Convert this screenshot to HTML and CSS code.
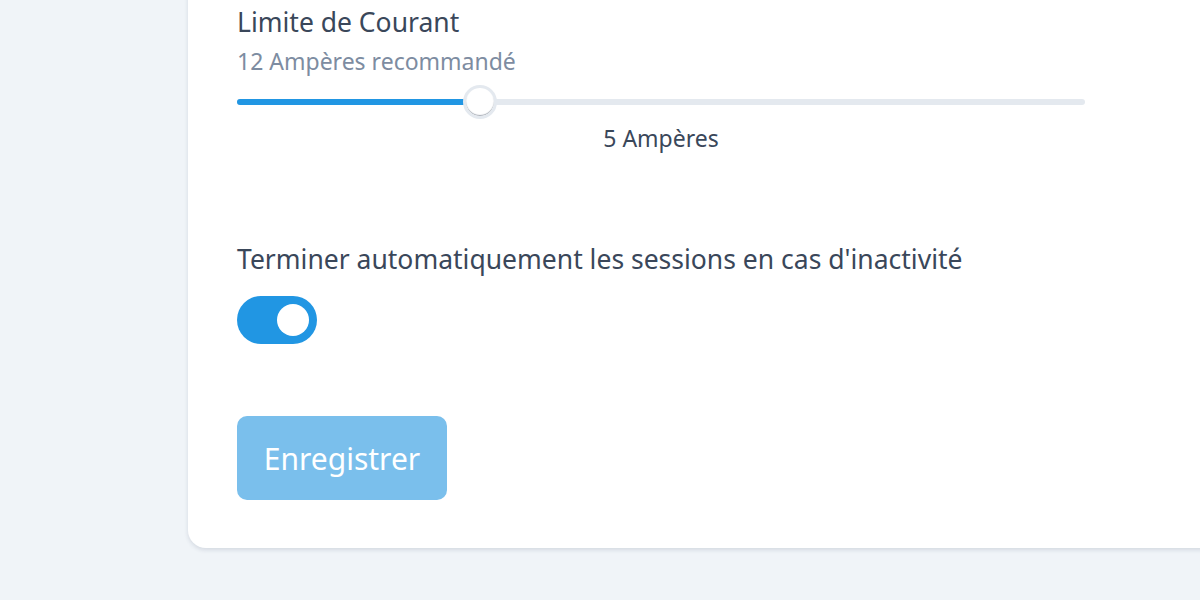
FILE: index.html
```html
<!DOCTYPE html>
<html>
<head>
    <title>Paramètres de charge</title>
    <meta http-equiv="Content-Type" content="text/html; charset=utf-8" />
    <link rel="stylesheet" href="styles.css">
</head>

<body>
    <div class="settings-card">
        <div class="field">
            <label class="field-label">Limite de Courant</label>
            <div class="field-hint">12 Ampères recommandé</div>
            <div class="slider">
                <div class="slider-track">
                    <div class="slider-fill" style="width: 28.66%;"></div>
                    <div class="slider-thumb" style="left: 28.66%;"></div>
                </div>
                <div class="slider-value">5 Ampères</div>
            </div>
        </div>

        <div class="field field-toggle">
            <label class="field-label">Terminer automatiquement les sessions en cas d'inactivité</label>
            <div class="toggle on">
                <span class="toggle-knob"></span>
            </div>
        </div>

        <button type="button" class="btn-save">Enregistrer</button>
    </div>
</body>
</html>
```

FILE: styles.css
```css
body {
    font-family: "Noto Sans", "Open Sans", sans-serif;
    margin: 0;
    padding: 0 0 8px 188px;
    background-color: #f0f4f8;
    color: #3a475a;
    overflow: hidden;
}
.settings-card {
    background-color: white;
    margin-top: -40px;
    padding: 44px 48px 48px 49px;
    border-radius: 0 0 0 18px;
    box-shadow: 0 2px 4px rgba(40, 60, 90, 0.14);
    width: 1100px;
}
.field-label {
    display: block;
    font-size: 26.5px;
    line-height: 36px;
}
.field-hint {
    font-size: 23px;
    line-height: 30px;
    margin-top: 6px;
    color: #7d8ca1;
}
.slider {
    width: 848px;
    margin-top: 23px;
}
.slider-track {
    position: relative;
    height: 6px;
    border-radius: 3px;
    background-color: #e4e9ef;
}
.slider-fill {
    height: 100%;
    border-radius: 3px;
    background-color: #2196e3;
}
.slider-thumb {
    position: absolute;
    top: 50%;
    width: 28px;
    height: 28px;
    margin: -17px 0 0 -17px;
    border: 3px solid #e4e9ef;
    border-radius: 50%;
    background-color: white;
    box-shadow: inset 0 -1px 1px rgba(60, 70, 90, 0.45);
}
.slider-value {
    text-align: center;
    font-size: 23px;
    line-height: 30px;
    margin-top: 18px;
}
.field-toggle {
    margin-top: 88px;
}
.toggle {
    width: 80px;
    height: 48px;
    margin-top: 19px;
    border-radius: 24px;
    background-color: #cbd5df;
    display: flex;
    align-items: center;
}
.toggle.on {
    background-color: #2196e3;
    justify-content: flex-end;
}
.toggle-knob {
    width: 32px;
    height: 32px;
    margin-right: 8px;
    border-radius: 50%;
    background-color: white;
}
.btn-save {
    display: block;
    margin-top: 72px;
    width: 210px;
    height: 84px;
    border: none;
    border-radius: 10px;
    background-color: #7abfec;
    color: white;
    font-family: inherit;
    font-size: 30px;
    cursor: pointer;
}
```
